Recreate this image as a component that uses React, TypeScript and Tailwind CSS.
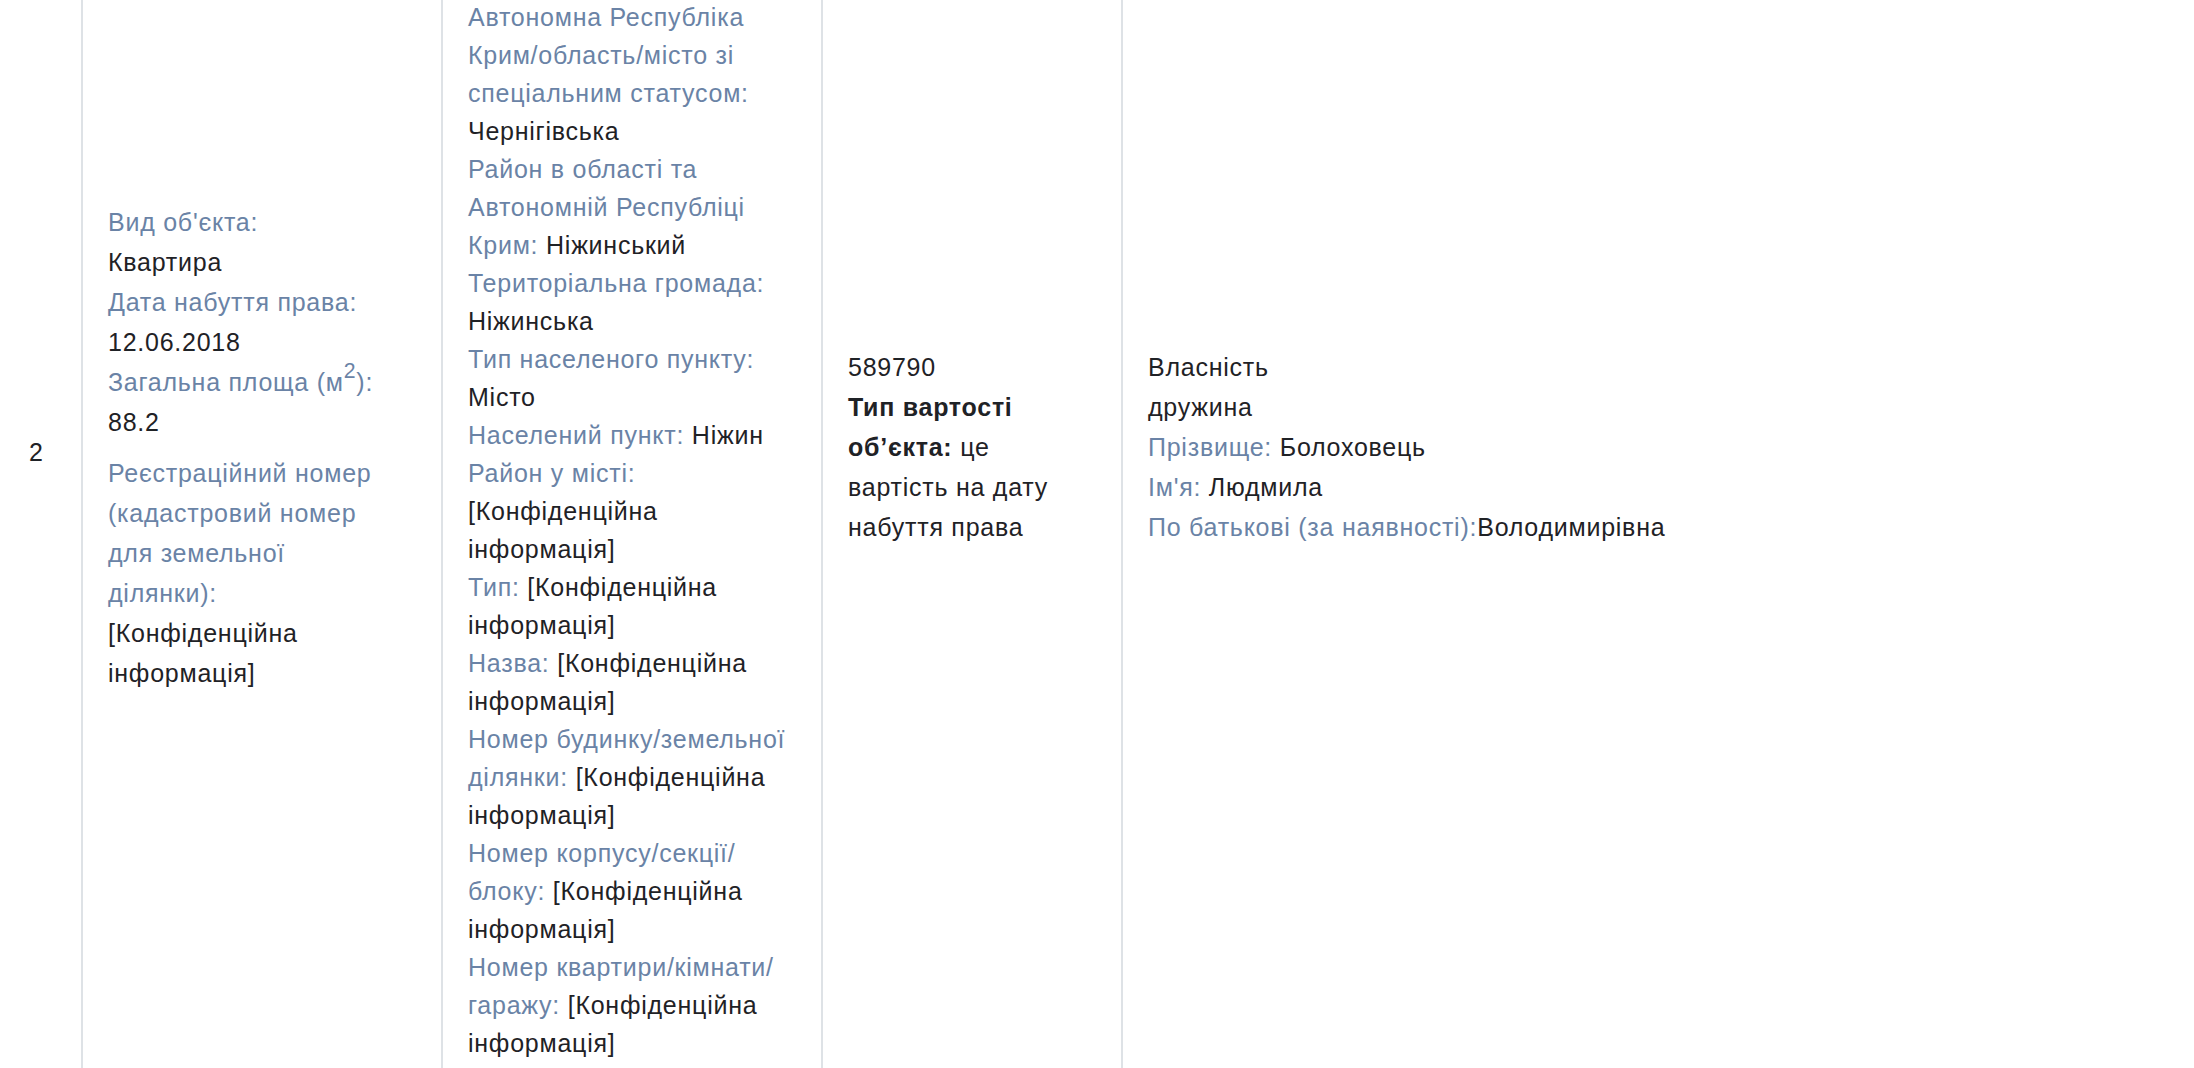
import React from 'react';

const label = 'text-[#6a83a6]';

function Line({ children, className = '' }: { children?: React.ReactNode; className?: string }) {
  return <div className={`whitespace-nowrap ${className}`}>{children}</div>;
}

function Confidential() {
  return <>[Конфіденційна</>;
}

export default function App() {
  return (
    <div className="h-[1068px] overflow-hidden bg-white font-['Liberation_Sans',Arial,sans-serif] text-[25px] tracking-[0.75px] text-[#1f2226]">
      <table className="-mt-[180px] w-full table-fixed border-collapse">
        <colgroup>
          <col className="w-[82px]" />
          <col className="w-[360px]" />
          <col className="w-[380px]" />
          <col className="w-[300px]" />
          <col />
        </colgroup>
        <tbody>
          <tr>
            <td className="pl-[29px] pt-[22px] pb-3 align-middle leading-[38px]">2</td>

            <td className="border-l-2 border-[#dee2e6] pl-[25px] pr-[20px] py-3 align-middle leading-[40px]">
              <Line className={label}>Вид об'єкта:</Line>
              <Line>Квартира</Line>
              <Line className={label}>Дата набуття права:</Line>
              <Line>12.06.2018</Line>
              <Line className={label}>
                Загальна площа (м<sup className="text-[0.85em] -top-[0.6em]">2</sup>):
              </Line>
              <Line>88.2</Line>
              <div className="mt-[11px]">
                <Line className={label}>Реєстраційний номер</Line>
                <Line className={label}>(кадастровий номер</Line>
                <Line className={label}>для земельної</Line>
                <Line className={label}>ділянки):</Line>
                <Line><Confidential /></Line>
                <Line>інформація]</Line>
              </div>
            </td>

            <td className="border-l-2 border-[#dee2e6] pl-[25px] pr-[20px] py-3 align-middle leading-[38px]">
              <div className="mb-[14px]">
                <Line><span className={label}>Країна:</span> Україна</Line>
                <Line className={label}>Поштовий індекс:</Line>
                <Line><Confidential /></Line>
                <Line>інформація]</Line>
              </div>
              <Line className={label}>Автономна Республіка</Line>
              <Line className={label}>Крим/область/місто зі</Line>
              <Line className={label}>спеціальним статусом:</Line>
              <Line>Чернігівська</Line>
              <Line className={label}>Район в області та</Line>
              <Line className={label}>Автономній Республіці</Line>
              <Line><span className={label}>Крим:</span> Ніжинський</Line>
              <Line className={label}>Територіальна громада:</Line>
              <Line>Ніжинська</Line>
              <Line className={label}>Тип населеного пункту:</Line>
              <Line>Місто</Line>
              <Line><span className={label}>Населений пункт:</span> Ніжин</Line>
              <Line className={label}>Район у місті:</Line>
              <Line><Confidential /></Line>
              <Line>інформація]</Line>
              <Line><span className={label}>Тип:</span> <Confidential /></Line>
              <Line>інформація]</Line>
              <Line><span className={label}>Назва:</span> <Confidential /></Line>
              <Line>інформація]</Line>
              <Line className={label}>Номер будинку/земельної</Line>
              <Line><span className={label}>ділянки:</span> <Confidential /></Line>
              <Line>інформація]</Line>
              <Line className={label}>Номер корпусу/секції/</Line>
              <Line><span className={label}>блоку:</span> <Confidential /></Line>
              <Line>інформація]</Line>
              <Line className={label}>Номер квартири/кімнати/</Line>
              <Line><span className={label}>гаражу:</span> <Confidential /></Line>
              <Line>інформація]</Line>
            </td>

            <td className="border-l-2 border-[#dee2e6] pl-[25px] pr-[20px] py-3 align-middle leading-[40px]">
              <Line>589790</Line>
              <Line className="font-bold">Тип вартості</Line>
              <Line><span className="font-bold">об’єкта:</span> це</Line>
              <Line>вартість на дату</Line>
              <Line>набуття права</Line>
            </td>

            <td className="border-l-2 border-[#dee2e6] pl-[25px] pr-[20px] py-3 align-middle leading-[40px]">
              <Line>Власність</Line>
              <Line>дружина</Line>
              <Line><span className={label}>Прізвище:</span> Болоховець</Line>
              <Line><span className={label}>Ім'я:</span> Людмила</Line>
              <Line><span className={label}>По батькові (за наявності):</span>Володимирівна</Line>
            </td>
          </tr>
        </tbody>
      </table>
    </div>
  );
}
